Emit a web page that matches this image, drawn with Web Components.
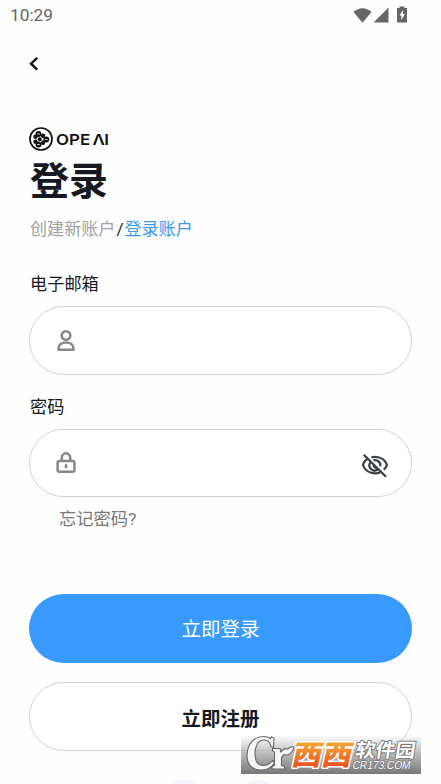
<!DOCTYPE html>
<html lang="zh-CN"><head><meta charset="utf-8"><title>登录</title>
<style>
body{margin:0;background:#fefefe;color:#16191f;font-family:Roboto,"Noto Sans CJK SC",sans-serif;width:441px;height:784px;overflow:hidden}
</style></head><body>
<login-screen></login-screen>
<script>
const define=(name,html)=>{
  const t=document.createElement('template');t.innerHTML=html;
  customElements.define(name,class extends HTMLElement{
    constructor(){super();this.attachShadow({mode:'open'}).append(t.content.cloneNode(true));}
  });
};
define('status-bar',`<style>
:host{display:flex;height:30px;box-sizing:border-box;padding:0 33px 0 10px;justify-content:space-between;align-items:center;color:#666;font:17.300px/30px Roboto,sans-serif}
svg{display:block;margin-top:-1px}</style>
<span>10:29</span>
<svg width="55" height="18" viewBox="353 5 55 18"><path fill="#666" d="M353.500 11q9-7.500 18 0l-9 10.800z"/><path fill="#666" d="M373.500 21.500L388.500 6.500v15zM399.500 5.500h5v1.500h2.500V21.500h-10V7h2.500z"/><path fill="#fff" d="M402.800 9l-3.300 5.500h1.800v4.500l3.600-6h-2.100z"/></svg>`);
define('back-button',`<style>:host{display:block;height:97px;padding:26px 0 0 29px;box-sizing:border-box}svg{display:block}</style>
<svg width="12" height="16" viewBox="0 0 12 16"><path d="M8.300 1.800L2 7.700l6.300 5.900" fill="none" stroke="#16191f" stroke-width="2.500"/></svg>`);
define('brand-logo',`<style>:host{display:flex;height:25px;align-items:center;gap:3px;color:#111}
svg{display:block}.word{display:flex;gap:2px;font:600 15px/25px Inter,sans-serif;transform:scaleX(1.13);transform-origin:left}.ai{letter-spacing:-.5px}</style>
<svg width="24" height="25" viewBox="0 0 24 25"><circle cx="12" cy="12" r="11" fill="#fff" stroke="#111" stroke-width="1.700"/><g fill="#111"><circle cx="9.500" cy="7" r="3"/><circle cx="14" cy="8.800" r="2.200"/><circle cx="17.300" cy="12.500" r="2.900"/><circle cx="9.500" cy="17.500" r="3"/><circle cx="14" cy="15.800" r="2.200"/><circle cx="6.500" cy="9.800" r="2.200"/><circle cx="6.500" cy="14.800" r="2.200"/><circle cx="10.800" cy="12.300" r="2"/></g><g fill="none" stroke="#fff" stroke-width=".7"><path d="M8 7h3M15.800 12.500h3M8 17.500h3"/></g></svg>
<span class="word"><span>OPE</span><span class="ai">ΛI</span></span>`);
define('account-tabs',`<style>:host{display:flex;height:26px;font-size:17.100px;line-height:26px}
::slotted([slot=other]){color:#a2a2a2}::slotted([slot=current]){color:#3b98ee}.s{width:9px;text-align:center}</style>
<slot name="other"></slot><span class="s">/</span><slot name="current"></slot>`);
define('form-field',`<style>:host{display:block}
.label{height:26px;font-size:17.200px;line-height:26px;padding-left:1px;margin-bottom:9px}
.box{height:69px;border:1px solid #cfd2d8;border-radius:35px;box-sizing:border-box;display:flex;justify-content:space-between;align-items:center;padding:0 22px 0 25px;background:#fff}:host([compact]) .box{height:68px}</style>
<div class="label"><slot></slot></div><div class="box"><slot name="icon"></slot><slot name="action"></slot></div>`);
define('field-icon-user',`<style>:host,svg{display:block}</style><svg width="22" height="24" viewBox="0 0 22 24" fill="none" stroke="#888" stroke-width="2.600"><circle cx="11" cy="6.500" r="4.300"/><path d="M3.500 20.700v-1.200c0-3.800 3.300-6 7.500-6s7.500 2.200 7.500 6v1.200z" stroke-linejoin="round"/></svg>`);
define('field-icon-lock',`<style>:host,svg{display:block}</style><svg width="22" height="24" viewBox="0 0 22 24" fill="none" stroke="#888" stroke-width="2.500"><rect x="2.600" y="10" width="16.800" height="10.800" rx="1.800"/><path d="M6.800 10V6.500a4.200 4.200 0 0 1 8.400 0V10M11 13.300v4"/></svg>`);
define('field-icon-eye-off',`<style>:host,svg{display:block}svg{margin-top:5px}</style><svg width="28" height="26" viewBox="0 0 28 26" fill="none" stroke="#3d4045" stroke-width="2.300"><path d="M7.500 5.500C4.500 7 2.500 9.800 2 12c1.500 4.700 6 8.300 12 8.300 2 0 3.800-.4 5.300-1.100M10.500 4.400q1.700-.5 3.500-.5c6 0 10.500 3.600 12 8.100-.6 1.800-1.700 3.300-3.200 4.700"/><path d="M9.200 9.500a5.300 5.300 0 0 0 7.300 7.300M12.500 7.400a5.200 5.200 0 0 1 6.800 5.800M2.800 1.800L25 23.800M12.800 11a2.500 2.500 0 0 0 2.500 3.500"/></svg>`);
define('pill-button',`<style>:host{display:flex;height:69px;border-radius:35px;box-sizing:border-box;align-items:center;justify-content:center;font-size:19.500px;line-height:28px;padding-top:2px}
:host([primary]){background:#389aff;color:#fff}:host(:not([primary])){border:1px solid #cfd2d8;background:#fff;font-weight:700;padding-top:6px}</style><slot></slot>`);
define('site-watermark',`<style>:host{position:absolute;left:241px;top:735px;width:180px;height:39px;display:block;background:linear-gradient(rgba(255,255,255,.05),rgba(170,170,170,.75) 45%,#777)}
svg{display:block;overflow:visible}text{paint-order:stroke;stroke-linejoin:round}</style>
<svg width="180" height="39" viewBox="0 0 180 39">
<defs><linearGradient id="o" x2="0" y2="1"><stop offset=".2" stop-color="#f7b03a"/><stop offset=".85" stop-color="#e9541f"/></linearGradient></defs>
<path d="M33 3L32.500 12.500l-2.500-1C29 7.500 27 5 23.500 5 17 5 14 11 14 18.500 14 26 17 30.500 22.500 30.500c4 0 7-2.500 9-5l2 2.500C30 33 24.500 35.500 18.500 35 10 34.500 5.500 28 6 20 6.500 9 13 1.500 22.500 1.500q4 0 7 2L30.500 2zM31.500 13.500h7.500l.8 3.500c2-3 4.500-4 7-3 2-2 4-2.800 6.500-2-2 6-5.500 9.500-10 7.500-2 1-2.800 2-2.800 4.500v6.500l3 1V34H31v-2.500l2.500-1V17L31.500 16z" fill="#f6f6f6" stroke="#666" stroke-width="1.100"/>
<g transform="translate(49.500 29.500) skewX(-13)"><text font-family="Noto Sans CJK SC" font-size="28" font-weight="900" fill="url(#o)" stroke="#fff" stroke-width="3" textLength="60" lengthAdjust="spacingAndGlyphs">西西</text></g>
<g transform="translate(113.500 22) skewX(-9)"><text font-family="Noto Sans CJK SC" font-size="19" font-weight="700" fill="#fff" stroke="#777" stroke-width="1.800" textLength="60" lengthAdjust="spacingAndGlyphs">软件园</text></g>
<g transform="translate(111 34) skewX(-10)"><text font-family="Liberation Sans" font-size="11.500" font-weight="400" fill="#fff" stroke="#777" stroke-width="1.500" textLength="58" lengthAdjust="spacingAndGlyphs">CR173.COM</text></g>
</svg>`);
define('social-dots',`<style>:host{display:flex;gap:33px;justify-content:center;padding-top:29px}i{width:40px;height:40px;border-radius:50%;background:#f4f4fe}</style><i></i><i></i>`);
define('login-screen',`<style>
:host{display:block;position:relative;width:441px;height:784px;overflow:hidden}
main{padding:0 29px}h1{margin:0 0 0 1px;height:56px;padding-top:2px;box-sizing:border-box;font-size:39px;line-height:56px;font-weight:700}
account-tabs{margin:8px 0 29px 1px}form-field+form-field{margin-top:19px}
.forgot{margin:9px 0 62px 30px;height:26px;font-size:17.300px;line-height:26px;color:#777}
pill-button+pill-button{margin-top:19px}</style>
<status-bar></status-bar><back-button></back-button>
<main><brand-logo></brand-logo><h1>登录</h1>
<account-tabs><span slot="other">创建新账户</span><span slot="current">登录账户</span></account-tabs>
<form-field>电子邮箱<field-icon-user slot="icon"></field-icon-user></form-field>
<form-field compact>密码<field-icon-lock slot="icon"></field-icon-lock><field-icon-eye-off slot="action"></field-icon-eye-off></form-field>
<div class="forgot">忘记密码?</div>
<pill-button primary>立即登录</pill-button><pill-button>立即注册</pill-button></main>
<social-dots></social-dots><site-watermark></site-watermark>`);
</script></body></html>
